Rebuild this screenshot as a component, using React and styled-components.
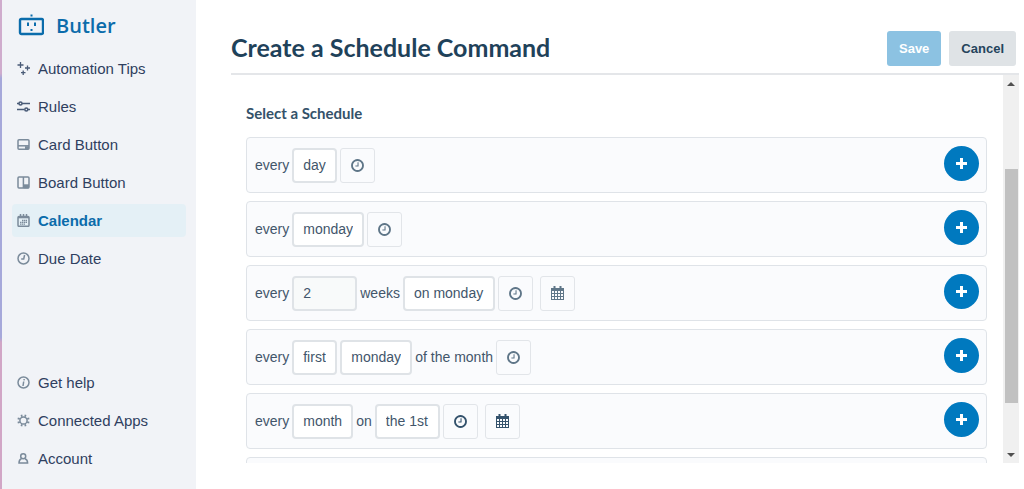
import React from 'react';
import styled, { createGlobalStyle, css } from 'styled-components';

const GlobalStyle = createGlobalStyle`
    * {
        box-sizing: border-box;
    }

    body {
        margin: 0;
        background: #fff;
        color: #42566b;
        font-family: 'Liberation Sans', Arial, sans-serif;
        font-size: 14px;
    }
`;

const Page = styled.div`
    display: flex;
    height: 100vh;
    overflow: hidden;
`;

const BoardEdge = styled.div`
    flex: none;
    width: 2px;
    background: linear-gradient(#cfaccd 0 15%, #a6a8da 16% 69%, #d1a6c6 70%);
`;

const Sidebar = styled.aside`
    display: flex;
    flex-direction: column;
    flex: none;
    width: 194px;
    padding: 10px 10px 14px;
    background: #f1f3f7;
`;

const Brand = styled.div`
    display: flex;
    align-items: center;
    gap: 12px;
    height: 30px;
    margin-bottom: 12px;
    padding-left: 6px;
    color: #0b6cab;
    font-family: 'Open Sans', 'Noto Sans', sans-serif;
    font-size: 20px;
    font-weight: 600;
`;

const Nav = styled.nav`
    display: flex;
    flex-direction: column;
    gap: 5px;

    & + & {
        margin-top: auto;
    }
`;

const NavLink = styled.a`
    display: flex;
    align-items: center;
    gap: 8px;
    height: 33px;
    padding-left: 5px;
    border-radius: 4px;
    color: #2f3f5f;
    font-size: 15px;
    text-decoration: none;

    svg {
        flex: none;
        color: ${props => (props.$dark ? '#4a5b77' : '#7b8b9b')};
    }

    ${props =>
        props.$active &&
        css`
            background: #e4f0f6;
            color: #0b6cab;
            font-weight: bold;
        `}
`;

const Main = styled.main`
    display: flex;
    flex-direction: column;
    flex: 1;
    min-width: 0;
    padding: 20px 5px 26px 35px;
`;

const Header = styled.header`
    display: flex;
    align-items: center;
    gap: 8px;
    flex: none;
    height: 55px;
    padding: 3px 3px 0 0;
    border-bottom: 2px solid #e4e6e9;
`;

const Title = styled.h1`
    flex: 1;
    margin: 0;
    padding-bottom: 2px;
    color: #1f425a;
    font-family: Lato, sans-serif;
    font-size: 25px;
    font-weight: bold;
    line-height: 32px;
`;

const Button = styled.button`
    height: 35px;
    padding: 0 12px;
    border: 0;
    border-radius: 3px;
    background: ${props => (props.$primary ? '#8cc2e2' : '#dfe3e6')};
    color: ${props => (props.$primary ? '#fff' : '#24445c')};
    font: bold 13px 'Liberation Sans', Arial, sans-serif;
`;

const Body = styled.div`
    display: flex;
    flex: 1;
    min-height: 0;
`;

const Content = styled.section`
    flex: 1;
    min-width: 0;
    overflow: hidden;
    padding: 28px 16px 0 15px;
`;

const Subtitle = styled.h2`
    margin: 0 0 14px;
    color: #34526a;
    font-family: Lato, sans-serif;
    font-size: 15px;
    font-weight: bold;
    line-height: 20px;
`;

const Schedules = styled.div`
    display: flex;
    flex-direction: column;
    gap: 8px;
`;

const Schedule = styled.div`
    display: flex;
    align-items: center;
    gap: 3px;
    height: 56px;
    padding: 0 7px 0 8px;
    border: 1px solid #dfe3e8;
    border-radius: 4px;
    background: #fafbfd;
`;

const field = css`
    height: 35px;
    margin: 0;
    padding: 0 9px;
    border: 2px solid #dfe3e7;
    border-radius: 4px;
    color: #42566b;
    font: 14px 'Liberation Sans', Arial, sans-serif;
`;

const Pill = styled.select`
    ${field}
    appearance: none;
    background: #fff;
`;

const NumberField = styled.input`
    ${field}
    width: 65px;
    background: #f8fafa;
`;

const IconButton = styled.button`
    display: flex;
    align-items: center;
    justify-content: center;
    width: 35px;
    height: 35px;
    padding: 0;
    border: 1px solid #e2e5e9;
    border-radius: 3px;
    background: #fafbfd;
    color: ${props => (props.$dark ? '#34526c' : '#5f7688')};

    & + & {
        margin-left: 4px;
    }
`;

const AddButton = styled.button`
    display: flex;
    align-items: center;
    justify-content: center;
    width: 35px;
    height: 35px;
    margin: 0 0 3px auto;
    padding: 0;
    border: 0;
    border-radius: 50%;
    background: #0079bf;
    color: #fff;
`;

const Scrollbar = styled.div`
    display: flex;
    flex-direction: column;
    align-items: center;
    flex: none;
    width: 16px;
    background: #f0f0f0;
    color: #505050;
`;

const ScrollArrow = styled.svg`
    flex: none;
    width: 16px;
    height: 17px;
`;

const ScrollTrack = styled.div`
    display: flex;
    flex-direction: column;
    flex: 1;
    width: 13px;
`;

const ScrollThumb = styled.div`
    flex: 0 0 66%;
    margin-top: auto;
    margin-bottom: 43px;
    background: #c1c1c1;
`;

const RobotIcon = () => (
    <svg width="26" height="24" viewBox="0 0 26 24" fill="none" stroke="currentColor" strokeWidth="2" aria-hidden="true">
        <rect x="2" y="6" width="23" height="15" rx="1.5" strokeWidth="2.4" />
        <path d="M10 9.5v3.5M17 9.5v3.5" />
        <path d="M13.5 1.5v2M13.5 16v2" />
    </svg>
);

const NavIcon = ({ children }) => (
    <svg width="13" height="13" viewBox="0 0 13 13" fill="none" stroke="currentColor" strokeWidth="1.5" aria-hidden="true">
        {children}
    </svg>
);

const SparkIcon = () => (
    <NavIcon>
        <path d="M3.5 0v6M.5 3h6M10.5 3.5v5M8 6h5M6.2 8.5v4.5M4 10.7h4.5" strokeWidth="1.3" />
    </NavIcon>
);

const RulesIcon = () => (
    <NavIcon>
        <path d="M0 3.5h2M5 3.5h8M0 9.5h7.5M11 9.5h2" strokeWidth="1.7" />
        <circle cx="3.5" cy="3.5" r="1.5" />
        <circle cx="9.3" cy="9.5" r="1.5" />
    </NavIcon>
);

const CardIcon = () => (
    <NavIcon>
        <rect x="1" y="1.7" width="11" height="9.6" rx="1" />
        <path d="M1 7.8h11" />
        <path d="M8 9.7h4" strokeWidth="3" />
    </NavIcon>
);

const BoardIcon = () => (
    <NavIcon>
        <rect x="1" y="1" width="11" height="11" rx="1" />
        <path d="M6.4 1v11" />
        <path d="M6.5 10.3H12" strokeWidth="4" />
    </NavIcon>
);

const CalendarIcon = () => (
    <NavIcon>
        <rect x="1" y="2.5" width="11" height="9.8" rx="1" />
        <path d="M1 3.3h11" strokeWidth="2" />
        <path d="M3.5 0v4M6.5 0v3M9.5 0v4" />
        <path d="M5 6.5h5M3 8.3h7M3 10.1h5" strokeWidth="1.3" strokeDasharray="1.4 .5" />
    </NavIcon>
);

const DueIcon = () => (
    <NavIcon>
        <circle cx="6.5" cy="6.5" r="5.5" />
        <path d="M7.6 3L6.7 7H4.2" />
    </NavIcon>
);

const InfoIcon = () => (
    <NavIcon>
        <circle cx="6.5" cy="6.5" r="5.5" />
        <path d="M6.7 5.5L6 10M7.2 3L7 4.3" />
    </NavIcon>
);

const GearIcon = () => (
    <NavIcon>
        <circle cx="6.5" cy="6.5" r="3.6" />
        <path
            d="M4.9 2.8L4.4.7M8.1 2.8L8.6.7M4.9 10.2l-.5 2.1M8.1 10.2l.5 2.1M2.8 4.9L.7 4.4M2.8 8.1l-2.1.5M10.2 4.9l2.1-.5M10.2 8.1l2.1.5"
            strokeWidth="1.7"
        />
    </NavIcon>
);

const AccountIcon = () => (
    <NavIcon>
        <circle cx="6.2" cy="4.3" r="2.5" />
        <path d="M4.4 6.8C2.6 7.4 2 8.6 2 11h8.6c0-2.4-.8-3.6-2.6-4.2" />
    </NavIcon>
);

const ClockIcon = () => (
    <svg width="13" height="15" viewBox="0 0 1536 1792" fill="currentColor" aria-hidden="true">
        <path d="M896 544v448q0 14-9 23t-23 9h-320q-14 0-23-9t-9-23v-64q0-14 9-23t23-9h224v-352q0-14 9-23t23-9h64q14 0 23 9t9 23zm416 352q0-148-73-273t-198-198-273-73-273 73-198 198-73 273 73 273 198 198 273 73 273-73 198-198 73-273zm224 0q0 209-103 385.5t-279.5 279.5-385.5 103-385.5-103-279.5-279.5-103-385.5 103-385.5 279.5-279.5 385.5-103 385.5 103 279.5 279.5 103 385.5z" />
    </svg>
);

const GridCalendarIcon = () => (
    <svg width="13" height="14" viewBox="0 0 13 14" fill="none" stroke="currentColor" aria-hidden="true">
        <path d="M0 3.5h13" strokeWidth="3" />
        <path d="M3.5 0v4M9.5 0v4" strokeWidth="2" />
        <rect x=".5" y="3.5" width="12" height="10" />
        <path d="M3.5 4v10M6.5 4v10M9.5 4v10M0 7.5h13M0 10.5h13" />
    </svg>
);

const PlusIcon = () => (
    <svg width="11" height="11" viewBox="0 0 11 11" fill="none" stroke="currentColor" strokeWidth="3" aria-hidden="true">
        <path d="M5.5 0v11M0 5.5h11" />
    </svg>
);

const primaryLinks = [
    { label: 'Automation Tips', icon: SparkIcon, dark: true },
    { label: 'Rules', icon: RulesIcon, dark: true },
    { label: 'Card Button', icon: CardIcon },
    { label: 'Board Button', icon: BoardIcon },
    { label: 'Calendar', icon: CalendarIcon, active: true },
    { label: 'Due Date', icon: DueIcon },
];

const secondaryLinks = [
    { label: 'Get help', icon: InfoIcon },
    { label: 'Connected Apps', icon: GearIcon },
    { label: 'Account', icon: AccountIcon },
];

const text = value => ({ type: 'text', value });
const pick = (value, label) => ({ type: 'pick', value, label });
const clock = { type: 'clock' };
const calendar = { type: 'calendar' };

const schedules = [
    { parts: [text('every'), pick('day', 'Interval'), clock] },
    { parts: [text('every'), pick('monday', 'Weekday'), clock] },
    {
        parts: [
            text('every'),
            { type: 'number', value: '2', label: 'Number of weeks' },
            text('weeks'),
            pick('on monday', 'Weekday'),
            clock,
            calendar,
        ],
    },
    {
        parts: [
            text('every'),
            pick('first', 'Position'),
            pick('monday', 'Weekday'),
            text('of the month'),
            clock,
        ],
    },
    {
        dark: true,
        parts: [
            text('every'),
            pick('month', 'Interval'),
            text('on'),
            pick('the 1st', 'Day of the month'),
            clock,
            calendar,
        ],
    },
];

function Part({ part, dark }) {
    switch (part.type) {
        case 'pick':
            return (
                <Pill aria-label={part.label}>
                    <option>{part.value}</option>
                </Pill>
            );
        case 'number':
            return <NumberField type="text" aria-label={part.label} defaultValue={part.value} />;
        case 'clock':
            return (
                <IconButton type="button" aria-label="Set time" $dark={dark}>
                    <ClockIcon />
                </IconButton>
            );
        case 'calendar':
            return (
                <IconButton type="button" aria-label="Set start date" $dark={dark}>
                    <GridCalendarIcon />
                </IconButton>
            );
        default:
            return <span>{part.value}</span>;
    }
}

function Links({ items, label }) {
    return (
        <Nav aria-label={label}>
            {items.map(({ label, icon: Icon, active, dark }) => (
                <NavLink
                    key={label}
                    href="#"
                    $active={active}
                    $dark={dark}
                    aria-current={active ? 'page' : undefined}
                >
                    <Icon />
                    {label}
                </NavLink>
            ))}
        </Nav>
    );
}

export default function App() {
    return (
        <Page>
            <GlobalStyle />
            <BoardEdge />
            <Sidebar>
                <Brand>
                    <RobotIcon />
                    Butler
                </Brand>
                <Links items={primaryLinks} label="Automation" />
                <Links items={secondaryLinks} label="Settings" />
            </Sidebar>
            <Main>
                <Header>
                    <Title>Create a Schedule Command</Title>
                    <Button type="button" $primary>
                        Save
                    </Button>
                    <Button type="button">Cancel</Button>
                </Header>
                <Body>
                    <Content>
                        <Subtitle>Select a Schedule</Subtitle>
                        <Schedules>
                            {schedules.map((schedule, index) => (
                                <Schedule key={index}>
                                    {schedule.parts.map((part, i) => (
                                        <Part key={i} part={part} dark={schedule.dark} />
                                    ))}
                                    <AddButton type="button" aria-label="Add schedule">
                                        <PlusIcon />
                                    </AddButton>
                                </Schedule>
                            ))}
                            <Schedule />
                        </Schedules>
                    </Content>
                    <Scrollbar aria-hidden="true">
                        <ScrollArrow viewBox="0 0 16 17">
                            <path d="M4 11l4-4 4 4z" fill="currentColor" />
                        </ScrollArrow>
                        <ScrollTrack>
                            <ScrollThumb />
                        </ScrollTrack>
                        <ScrollArrow viewBox="0 0 16 17">
                            <path d="M4 7l4 4 4-4z" fill="currentColor" />
                        </ScrollArrow>
                    </Scrollbar>
                </Body>
            </Main>
        </Page>
    );
}
